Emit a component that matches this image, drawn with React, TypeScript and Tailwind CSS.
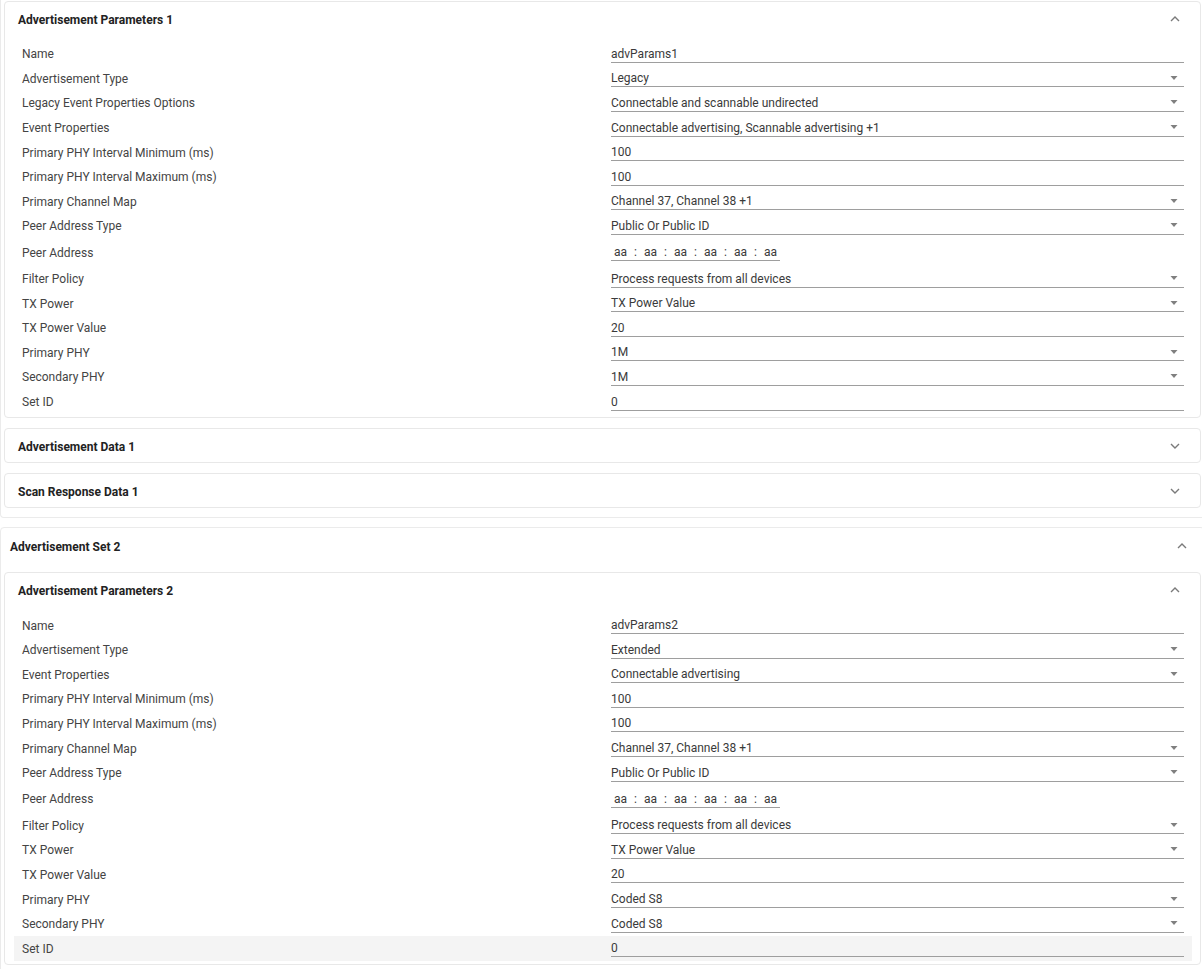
import React from "react";

type Field = {
  label: string;
  value: string;
  kind: "text" | "select" | "mac";
  active?: boolean;
};

const params1: Field[] = [
  { label: "Name", value: "advParams1", kind: "text" },
  { label: "Advertisement Type", value: "Legacy", kind: "select" },
  { label: "Legacy Event Properties Options", value: "Connectable and scannable undirected", kind: "select" },
  { label: "Event Properties", value: "Connectable advertising, Scannable advertising +1", kind: "select" },
  { label: "Primary PHY Interval Minimum (ms)", value: "100", kind: "text" },
  { label: "Primary PHY Interval Maximum (ms)", value: "100", kind: "text" },
  { label: "Primary Channel Map", value: "Channel 37, Channel 38 +1", kind: "select" },
  { label: "Peer Address Type", value: "Public Or Public ID", kind: "select" },
  { label: "Peer Address", value: "aa:aa:aa:aa:aa:aa", kind: "mac" },
  { label: "Filter Policy", value: "Process requests from all devices", kind: "select" },
  { label: "TX Power", value: "TX Power Value", kind: "select" },
  { label: "TX Power Value", value: "20", kind: "text" },
  { label: "Primary PHY", value: "1M", kind: "select" },
  { label: "Secondary PHY", value: "1M", kind: "select" },
  { label: "Set ID", value: "0", kind: "text" },
];

const params2: Field[] = [
  { label: "Name", value: "advParams2", kind: "text" },
  { label: "Advertisement Type", value: "Extended", kind: "select" },
  { label: "Event Properties", value: "Connectable advertising", kind: "select" },
  { label: "Primary PHY Interval Minimum (ms)", value: "100", kind: "text" },
  { label: "Primary PHY Interval Maximum (ms)", value: "100", kind: "text" },
  { label: "Primary Channel Map", value: "Channel 37, Channel 38 +1", kind: "select" },
  { label: "Peer Address Type", value: "Public Or Public ID", kind: "select" },
  { label: "Peer Address", value: "aa:aa:aa:aa:aa:aa", kind: "mac" },
  { label: "Filter Policy", value: "Process requests from all devices", kind: "select" },
  { label: "TX Power", value: "TX Power Value", kind: "select" },
  { label: "TX Power Value", value: "20", kind: "text" },
  { label: "Primary PHY", value: "Coded S8", kind: "select" },
  { label: "Secondary PHY", value: "Coded S8", kind: "select" },
  { label: "Set ID", value: "0", kind: "text", active: true },
];

const Chevron = ({ up }: { up: boolean }) => (
  <svg width="10" height="6" viewBox="0 0 10 6" className="shrink-0">
    <polyline
      points={up ? "1,5 5,1 9,5" : "1,1 5,5 9,1"}
      fill="none"
      stroke="#7a7a7a"
      strokeWidth="1.4"
    />
  </svg>
);

const Caret = () => (
  <svg width="8" height="5" viewBox="0 0 8 5" className="shrink-0">
    <polygon points="0.5,0 7.5,0 4,4" fill="#808080" />
  </svg>
);

// six octet boxes joined by colons, one shared underline
const MacInput = ({ value }: { value: string }) => {
  const octets = value.split(":");
  return (
    <div className="flex h-[17px] items-center border-b border-[#9e9e9e] px-[3px] text-[#3a3a3a]">
      {octets.map((o, i) => (
        <React.Fragment key={i}>
          {i > 0 && <span className="w-[17px] text-center">:</span>}
          <span className="w-[13px] text-center">{o}</span>
        </React.Fragment>
      ))}
    </div>
  );
};

const FieldRow = ({ f }: { f: Field }) => (
  <div
    className={`grid grid-cols-2 items-center ${f.kind === "mac" ? "h-[28px]" : "h-[24.6px]"} ${
      f.active ? "bg-[#f4f4f4]" : ""
    }`}
  >
    <div className="px-2 text-[#444]">{f.label}</div>
    <div className="px-2">
      {f.kind === "mac" ? (
        <div className="flex">
          <MacInput value={f.value} />
        </div>
      ) : (
        <div className="flex h-[17px] items-center justify-between border-b border-[#9e9e9e] pr-[6px] text-[#3a3a3a]">
          <span>{f.value}</span>
          {f.kind === "select" && <Caret />}
        </div>
      )}
    </div>
  </div>
);

const Panel = ({
  title,
  open,
  fields = [],
}: {
  title: string;
  open: boolean;
  fields?: Field[];
}) => (
  <div className="rounded border border-[#e8e8e8] bg-white">
    <div className="flex h-[33px] items-start justify-between pl-[13px] pr-[20px] pt-[11px]">
      <span className="text-[12px] font-bold leading-[14px] text-[#222]">{title}</span>
      <div className="mt-[3px]">
        <Chevron up={open} />
      </div>
    </div>
    {open && (
      <div className="pb-[3px] pl-[9px] pr-[8px] pt-[7px]">
        {fields.map((f) => (
          <FieldRow key={f.label} f={f} />
        ))}
      </div>
    )}
  </div>
);

export default function App() {
  return (
    <div className="w-[1202px] overflow-hidden bg-white pb-4 font-['Roboto',sans-serif] text-[12px] leading-[14px]">
      {/* Advertisement Set 1 (header scrolled above) */}
      <div className="flex w-[1205px] flex-col gap-[10px] rounded-b border border-t-0 border-[#ebebeb] px-[3px] pb-[9px] pt-[1px]">
        <Panel title="Advertisement Parameters 1" open fields={params1} />
        <Panel title="Advertisement Data 1" open={false} />
        <Panel title="Scan Response Data 1" open={false} />
      </div>

      {/* Advertisement Set 2 */}
      <div className="mt-[9px] w-[1205px] rounded border border-[#ebebeb] px-[3px] pb-[9px]">
        <div className="flex h-[44px] items-start justify-between pl-[6px] pr-[14px] pt-[12px]">
          <span className="text-[12px] font-bold leading-[14px] text-[#222]">Advertisement Set 2</span>
          <div className="mt-[3px]">
            <Chevron up />
          </div>
        </div>
        <Panel title="Advertisement Parameters 2" open fields={params2} />
      </div>
    </div>
  );
}
